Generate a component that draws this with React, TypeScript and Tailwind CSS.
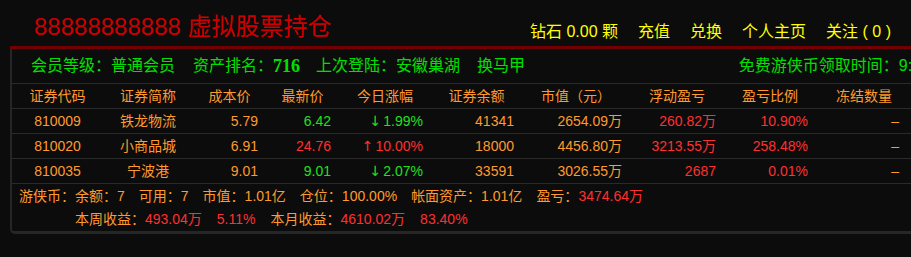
import React from "react";

const ORANGE = "text-[#ff9a2e]";
const RED = "text-[#ff3030]";
const GREEN = "text-[#1fe01f]";

type Row = {
  code: string;
  name: string;
  cost: string;
  last: string;
  lastUp: boolean;
  chg: string;
  qty: string;
  mv: string;
  pl: string;
  ratio: string;
};

const rows: Row[] = [
  { code: "810009", name: "铁龙物流", cost: "5.79", last: "6.42", lastUp: false, chg: "1.99%", qty: "41341", mv: "2654.09万", pl: "260.82万", ratio: "10.90%" },
  { code: "810020", name: "小商品城", cost: "6.91", last: "24.76", lastUp: true, chg: "10.00%", qty: "18000", mv: "4456.80万", pl: "3213.55万", ratio: "258.48%" },
  { code: "810035", name: "宁波港", cost: "9.01", last: "9.01", lastUp: false, chg: "2.07%", qty: "33591", mv: "3026.55万", pl: "2687", ratio: "0.01%" },
];

const headers = ["证券代码", "证券简称", "成本价", "最新价", "今日涨幅", "证券余额", "市值（元）", "浮动盈亏", "盈亏比例", "冻结数量"];

const GRID = "grid grid-cols-[91px_90px_73px_73px_92px_91px_108px_94px_92px_96px]";

export default function App() {
  return (
    <div className="w-[911px] h-[257px] overflow-hidden bg-[#0c0c0c] font-['Liberation_Sans','Noto_Sans_CJK_SC',sans-serif]">
      {/* top bar */}
      <div className="flex h-[46px] w-[911px] whitespace-nowrap">
        <div className="pl-[34px] pt-[13px] text-[24px] leading-[28px] text-[#cc0000]">88888888888 虚拟股票持仓</div>
        <div className="ml-auto mr-[20px] flex gap-[20px] pt-[22px] text-[16px] leading-[20px] text-[#ffff00]">
          <span>钻石 0.00 颗</span>
          <span>充值</span>
          <span>兑换</span>
          <span>个人主页</span>
          <span>关注 ( 0 )</span>
        </div>
      </div>

      <div className="ml-[10px] h-[3px] w-[960px] bg-[#720000]" />

      <div className="ml-[10px] w-[934px] rounded-bl-[5px] border-b-[3px] border-l-2 border-[#262626]">
        {/* info row */}
        <div className="flex h-[35px] items-center whitespace-nowrap border-b border-[#2a2a2a] pl-[19px] pr-[14px] text-[16px] text-[#00e000]">
          <span>会员等级：普通会员</span>
          <span className="ml-[18px]">资产排名：</span>
          <span className="font-['Liberation_Serif'] text-[18px] font-bold">716</span>
          <span className="ml-[16px]">上次登陆：安徽巢湖</span>
          <span className="ml-[17px]">换马甲</span>
          <span className="ml-auto">免费游侠币领取时间：9:00</span>
        </div>

        {/* table header */}
        <div className={`${GRID} h-[25px] items-center border-b border-[#2a2a2a] text-[14px] ${ORANGE}`}>
          {headers.map((h) => (
            <div key={h} className="text-center">
              {h}
            </div>
          ))}
        </div>

        {rows.map((r) => (
          <div key={r.code} className={`${GRID} h-[25px] items-center border-b border-[#2a2a2a] text-[14px] whitespace-nowrap`}>
            <div className={`text-center ${ORANGE}`}>{r.code}</div>
            <div className={`text-center ${ORANGE}`}>{r.name}</div>
            <div className={`pr-[8px] text-right ${ORANGE}`}>{r.cost}</div>
            <div className={`pr-[8px] text-right ${r.lastUp ? RED : GREEN}`}>{r.last}</div>
            <div className={`pr-[8px] text-right ${r.lastUp ? RED : GREEN}`}>
              <span className="font-['DejaVu_Sans']">{r.lastUp ? "↑" : "↓"}</span>
              <span className="ml-[2px]">{r.chg}</span>
            </div>
            <div className={`pr-[8px] text-right ${ORANGE}`}>{r.qty}</div>
            <div className={`pr-[8px] text-right ${ORANGE}`}>{r.mv}</div>
            <div className={`pr-[8px] text-right ${RED}`}>{r.pl}</div>
            <div className={`pr-[8px] text-right ${RED}`}>{r.ratio}</div>
            <div className={`pr-[13px] text-right ${ORANGE}`}>–</div>
          </div>
        ))}

        {/* footer */}
        <div className={`h-[47px] whitespace-nowrap pl-[7px] text-[14px] ${ORANGE}`}>
          <div className="flex h-[24px] items-center gap-[14px]">
            <span>
              游侠币：余额：<span>7</span>
            </span>
            <span>可用：7</span>
            <span>市值：1.01亿</span>
            <span>仓位：100.00%</span>
            <span>帐面资产：1.01亿</span>
            <span>
              盈亏：<span className={RED}>3474.64万</span>
            </span>
          </div>
          <div className="flex h-[23px] items-center gap-[15px] pl-[56px]">
            <span>
              本周收益：<span className={RED}>493.04万</span>
            </span>
            <span className={RED}>5.11%</span>
            <span>
              本月收益：<span className={RED}>4610.02万</span>
            </span>
            <span className={RED}>83.40%</span>
          </div>
        </div>
      </div>
    </div>
  );
}
